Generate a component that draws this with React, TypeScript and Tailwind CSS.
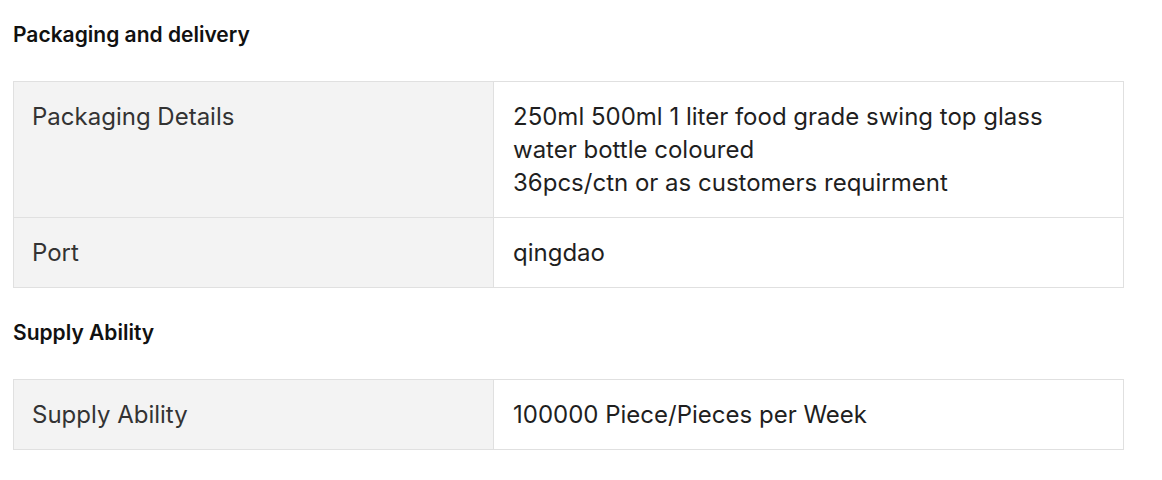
import React from 'react';

type Row = { label: string; value: string[] };

const sections: Array<{ title: string; rows: Row[] }> = [
  {
    title: 'Packaging and delivery',
    rows: [
      {
        label: 'Packaging Details',
        value: ['250ml 500ml 1 liter food grade swing top glass water bottle coloured', '36pcs/ctn or as customers requirment'],
      },
      { label: 'Port', value: ['qingdao'] },
    ],
  },
  {
    title: 'Supply Ability',
    rows: [{ label: 'Supply Ability', value: ['100000 Piece/Pieces per Week'] }],
  },
];

const SpecTable: React.FC<{ rows: Row[] }> = ({ rows }) => (
  <table className="w-[1111px] border-collapse table-fixed">
    <tbody>
      {rows.map((row) => (
        <tr key={row.label}>
          <td className="w-[480px] align-top border border-[#e0e0e0] bg-[#f3f3f3] px-[18px] py-[18px] text-[24px] leading-[33px] text-[#333]">
            {row.label}
          </td>
          <td className="align-top border border-[#e0e0e0] bg-white pl-[19px] pr-[60px] py-[18px] text-[24px] leading-[33px] text-[#1f1f1f]">
            {row.value.map((line) => (
              <div key={line}>{line}</div>
            ))}
          </td>
        </tr>
      ))}
    </tbody>
  </table>
);

export default function App() {
  return (
    <div className="w-[1162px] h-[480px] bg-white px-[13px] pt-[24px] font-['Inter','Noto_Sans',sans-serif]">
      {sections.map((section, i) => (
        <section key={section.title} className={i > 0 ? 'mt-[34px]' : ''}>
          <h2 className="text-[21px] leading-[22px] font-semibold text-[#111] mb-[35px]">{section.title}</h2>
          <SpecTable rows={section.rows} />
        </section>
      ))}
    </div>
  );
}
